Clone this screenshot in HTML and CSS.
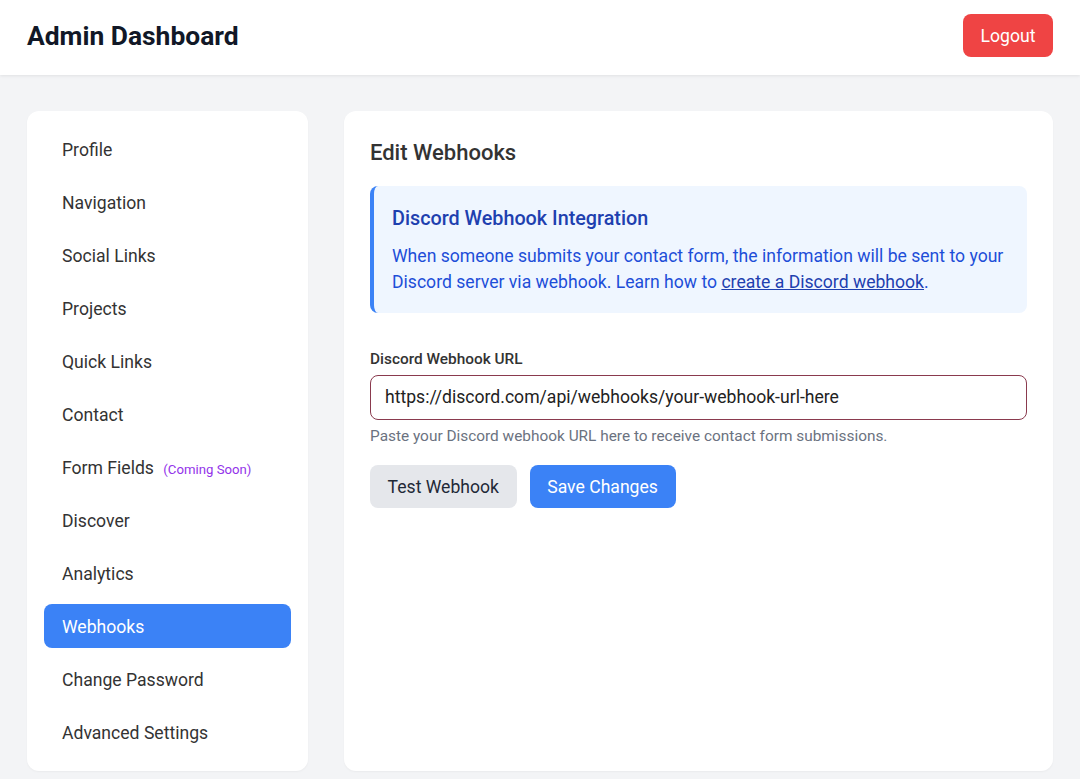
FILE: index.html
```html
<!DOCTYPE html>
<html lang="en">
<head>
<meta charset="utf-8">
<title>Admin Dashboard</title>
<link rel="stylesheet" href="styles.css">
</head>
<body>
<header class="topbar">
  <h1 class="brand">Admin Dashboard</h1>
  <button class="btn btn-danger">Logout</button>
</header>
<div class="layout">
  <nav class="sidebar">
    <a class="nav-item">Profile</a>
    <a class="nav-item">Navigation</a>
    <a class="nav-item">Social Links</a>
    <a class="nav-item">Projects</a>
    <a class="nav-item">Quick Links</a>
    <a class="nav-item">Contact</a>
    <a class="nav-item">Form Fields <span class="soon">(Coming Soon)</span></a>
    <a class="nav-item">Discover</a>
    <a class="nav-item">Analytics</a>
    <a class="nav-item active">Webhooks</a>
    <a class="nav-item">Change Password</a>
    <a class="nav-item">Advanced Settings</a>
  </nav>
  <main class="panel">
    <h2 class="panel-title">Edit Webhooks</h2>
    <div class="info">
      <h3 class="info-title">Discord Webhook Integration</h3>
      <p class="info-text">When someone submits your contact form, the information will be sent to your Discord server via webhook. Learn how to <a class="info-link">create a Discord webhook</a>.</p>
    </div>
    <label class="field-label">Discord Webhook URL</label>
    <div class="input">https://discord.com/api/webhooks/your-webhook-url-here</div>
    <p class="help">Paste your Discord webhook URL here to receive contact form submissions.</p>
    <div class="actions">
      <button class="btn btn-gray">Test Webhook</button>
      <button class="btn btn-primary">Save Changes</button>
    </div>
  </main>
</div>
</body>
</html>
```
FILE: styles.css
```css
* { box-sizing: border-box; }
html, body { margin: 0; padding: 0; }
body {
  font-family: Roboto, "Liberation Sans", sans-serif;
  background: #f3f4f6;
  color: #1f2937;
  height: 779px;
  overflow: hidden;
}
.topbar {
  height: 75px;
  background: #fff;
  display: flex;
  align-items: center;
  justify-content: space-between;
  padding: 0 27px 4px;
  box-shadow: 0 1px 3px rgba(0,0,0,0.08);
}
.brand {
  margin: 0;
  font-size: 26.4px;
  font-weight: 700;
  line-height: 32px;
  color: #111827;
}
.btn {
  font-family: inherit;
  font-size: 17.6px;
  border: none;
  border-radius: 8px;
  height: 43px;
  padding: 0 17.6px;
  cursor: pointer;
}
.btn-danger { background: #ef4444; color: #fff; }
.btn-gray { background: #e5e7eb; color: #1f2937; }
.btn-primary { background: #3b82f6; color: #fff; }
.layout {
  display: flex;
  gap: 36px;
  padding: 36px 27px 0;
}
.sidebar {
  width: 281px;
  height: 660px;
  background: #fff;
  border-radius: 12px;
  padding: 16px 17px;
  display: flex;
  flex-direction: column;
  gap: 9px;
  box-shadow: 0 1px 2px rgba(0,0,0,0.04);
}
.nav-item {
  display: block;
  height: 44px;
  line-height: 46px;
  padding: 0 18px;
  font-size: 17.6px;
  color: #333;
  border-radius: 8px;
}
.nav-item.active { background: #3b82f6; color: #fff; }
.soon {
  font-size: 13.2px;
  color: #9333ea;
  margin-left: 5px;
}
.panel {
  flex: 1;
  height: 660px;
  background: #fff;
  border-radius: 12px;
  padding: 27px 26px;
  box-shadow: 0 1px 2px rgba(0,0,0,0.04);
}
.panel-title {
  margin: 0 0 18px;
  font-size: 22px;
  font-weight: 500;
  line-height: 30px;
  color: #333;
}
.info {
  background: #eff6ff;
  border-left: 4px solid #3b82f6;
  border-radius: 8px;
  padding: 19px 18px 18px 18px;
}
.info-title {
  margin: 0 0 11px;
  font-size: 19.8px;
  font-weight: 500;
  line-height: 27px;
  color: #1e40af;
}
.info-text {
  margin: 0;
  font-size: 17.6px;
  line-height: 26px;
  color: #1d4ed8;
}
.info-link { text-decoration: underline; color: #1e40af; }
.field-label {
  display: block;
  margin-top: 36px;
  font-size: 15.4px;
  font-weight: 500;
  line-height: 20px;
  color: #333;
}
.input {
  margin-top: 6px;
  height: 45px;
  border: 1px solid #8a3a4e;
  border-radius: 8px;
  padding: 0 14px;
  line-height: 43px;
  font-size: 17.6px;
  color: #222;
}
.help {
  margin: 6px 0 0;
  font-size: 15.4px;
  line-height: 20px;
  color: #6b7280;
}
.actions {
  display: flex;
  gap: 13px;
  margin-top: 19px;
}
```
